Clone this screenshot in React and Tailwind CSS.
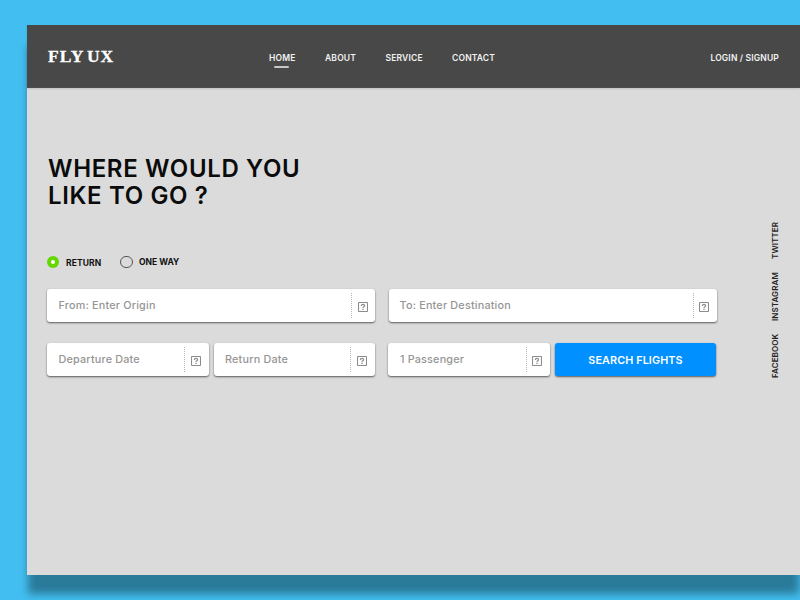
const Help = ({ className = '' }) => (
  <svg viewBox="0 0 10 10" className={`h-[10px] w-[10px] shrink-0 ${className}`} fill="none" stroke="#8c8c8c">
    <rect x="0.5" y="0.5" width="9" height="9" rx="0.8" strokeWidth="1.1" />
    <path d="M3.4 4V3.7Q3.4 2.4 5 2.4Q6.6 2.4 6.6 3.7Q6.6 4.4 5.7 4.8Q5 5.1 5 5.9" strokeWidth="1.2" />
    <path d="M5 6.7V7.9" strokeWidth="1.3" />
  </svg>
);

const Field = ({ label, className, line = 'mr-[6px]' }) => (
  <div className={`flex h-[33px] items-center rounded-[3px] bg-white shadow-[0_1px_2px_rgba(0,0,0,0.6)] ${className}`}>
    <span className="grow whitespace-nowrap pt-[2px] text-[10.8px] font-medium tracking-[0.2px] text-[#959595]">{label}</span>
    <span className={`h-[25px] w-0 border-l border-dotted border-[#b8b8b8] ${line}`} />
    <Help className="mt-[2px]" />
  </div>
);

const navItems = [
  { label: 'HOME', box: 'w-[56px]', active: true },
  { label: 'ABOUT', box: 'w-[60.5px]' },
  { label: 'SERVICE', box: 'w-[66.5px]' },
  { label: 'CONTACT', box: 'w-[60px]' },
];

export default function App() {
  return (
    <div className="h-[600px] w-[800px] overflow-hidden bg-[#42bff0] pl-[27px] pt-[25px] font-['Inter','Liberation_Sans',sans-serif]">
      <div className="flex h-[550px] w-[773px] flex-col bg-[#dbdbdb] shadow-[0_20px_8px_-1px_rgba(0,0,0,0.36)]">
        <header className="flex h-[63px] shrink-0 items-center border-b border-[#4f4c4c] bg-[#484848] pl-[21px] text-[8.5px] font-semibold tracking-[0.17px] text-[#f2f2f2] shadow-[0_1px_2px_rgba(0,0,0,0.12)]">
          <div className="w-[221px] whitespace-nowrap pt-[2px] font-['Liberation_Serif',serif] text-[17.5px] font-bold leading-none tracking-[0.95px] text-white [-webkit-text-stroke:0.3px_white] [word-spacing:-1.9px]">
            FLY UX
          </div>
          <nav className="flex grow pt-[7px]">
            {navItems.map((n) => (
              <div key={n.label} className={`h-[14px] shrink-0 leading-[10px] ${n.box}`}>
                <span className="inline-flex flex-col items-center whitespace-nowrap">
                  {n.label}
                  {n.active && <span className="mr-[2px] mt-[3px] h-[2px] w-[15px] rounded-[1px] bg-[#c8c8c8]" />}
                </span>
              </div>
            ))}
          </nav>
          <span className="mr-[21px] mt-[4px] whitespace-nowrap leading-[10px]">LOGIN / SIGNUP</span>
        </header>
        <div className="flex grow">
          <main className="ml-[20px] w-[670px] pt-[67px]">
            <h1 className="pl-px text-[24px] font-semibold leading-[27px] tracking-[0.65px] text-[#0b0b0b]">
              <span className="block">WHERE WOULD YOU</span>
              <span className="block">LIKE TO GO ?</span>
            </h1>
            <div className="mt-[47px] flex h-[12px] items-center text-[8.5px] font-bold text-[#111111]">
              <span className="flex h-[12px] w-[12px] items-center justify-center rounded-full bg-[#64d600]">
                <span className="h-[4px] w-[4px] rounded-full bg-white" />
              </span>
              <span className="ml-[7px] mt-[2px] w-[54px] tracking-[0.1px]">RETURN</span>
              <span className="h-[12.5px] w-[12.5px] rounded-full border border-[#555555]" />
              <span className="ml-[6.5px] whitespace-nowrap">ONE WAY</span>
            </div>
            <div className="mt-[21px] flex gap-[13.5px]">
              <Field label="From: Enter Origin" className="w-[328px] pl-[11.5px] pr-[7px]" line="mr-[6.5px]" />
              <Field label="To: Enter Destination" className="w-[328px] pl-[11px] pr-[7.5px]" line="mr-[5.5px]" />
            </div>
            <div className="mt-[21px] flex">
              <Field label="Departure Date" className="w-[162px] pl-[11.5px] pr-[8px]" />
              <Field label="Return Date" className="ml-[4.5px] w-[161.5px] pl-[11.5px] pr-[8px]" />
              <Field label="1 Passenger" className="ml-[13.4px] w-[161.6px] pl-[11.5px] pr-[8px]" line="mr-[5px]" />
              <button className="ml-[5px] h-[33px] w-[161px] rounded-[3px] bg-[#0090ff] pt-[3px] text-[10.8px] font-semibold tracking-[0.1px] text-white shadow-[0_1px_2px_rgba(0,0,0,0.6)]">
                SEARCH FLIGHTS
              </button>
            </div>
          </main>
          <aside className="ml-[53px] mt-[132px] flex h-[158px] rotate-180 items-end gap-[13px] text-[8.1px] font-semibold leading-[10px] tracking-[0.04px] text-[#222222] [writing-mode:vertical-rl]">
            <span className="shrink-0 whitespace-nowrap">FACEBOOK</span>
            <span className="shrink-0 whitespace-nowrap">INSTAGRAM</span>
            <span className="shrink-0 whitespace-nowrap">TWITTER</span>
          </aside>
        </div>
      </div>
    </div>
  );
}
